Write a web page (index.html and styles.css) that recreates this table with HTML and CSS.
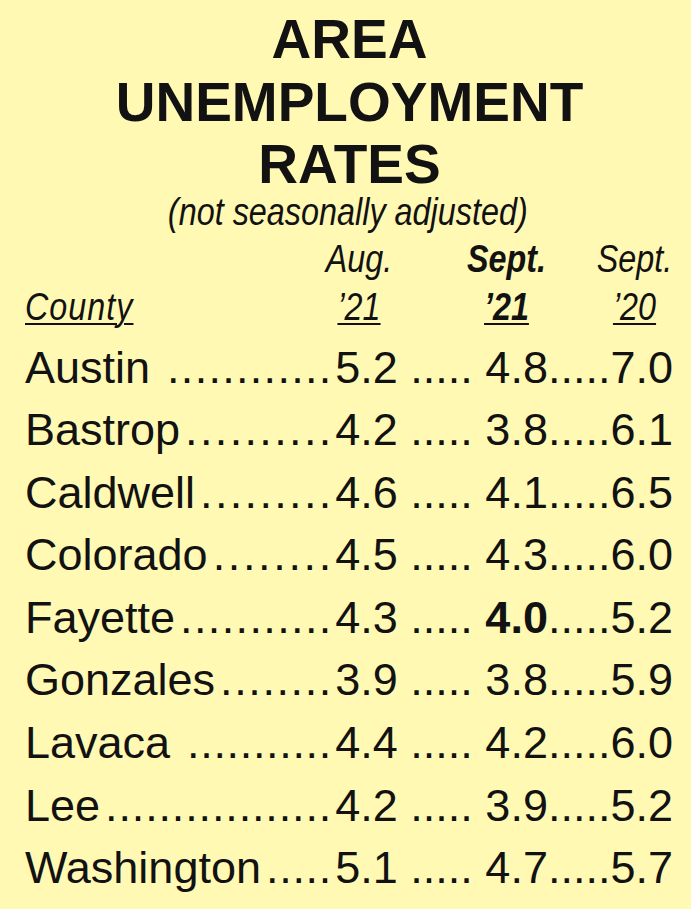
FILE: index.html
```html
<!DOCTYPE html>
<html lang="en">
<head>
<meta charset="utf-8">
<title>Area Unemployment Rates</title>
<link rel="stylesheet" href="styles.css">
</head>
<body>
<main class="panel">
  <h1 class="title">AREA<br>UNEMPLOYMENT<br>RATES</h1>
  <p class="subtitle"><span class="narrow">(not seasonally adjusted)</span></p>
  <div class="head">
    <span class="county"><u>County</u></span>
    <span class="col">Aug.<br><u>’21</u></span>
    <span class="col cur">Sept.<br><u>’21</u></span>
    <span class="col">Sept.<br><u>’20</u></span>
  </div>
  <ul class="rows">
    <li class="row"><span class="name sp">Austin</span><span class="lead">. . . . . . . . . . . .</span><span class="vals">5.2 ..... 4.8.....7.0</span></li>
    <li class="row"><span class="name">Bastrop</span><span class="lead">. . . . . . . . . .</span><span class="vals">4.2 ..... 3.8.....6.1</span></li>
    <li class="row"><span class="name">Caldwell</span><span class="lead">. . . . . . . . .</span><span class="vals">4.6 ..... 4.1.....6.5</span></li>
    <li class="row"><span class="name">Colorado</span><span class="lead">. . . . . . . .</span><span class="vals">4.5 ..... 4.3.....6.0</span></li>
    <li class="row"><span class="name">Fayette</span><span class="lead">. . . . . . . . . . .</span><span class="vals">4.3 ..... <b>4.0</b>.....5.2</span></li>
    <li class="row"><span class="name">Gonzales</span><span class="lead">. . . . . . . .</span><span class="vals">3.9 ..... 3.8.....5.9</span></li>
    <li class="row"><span class="name sp">Lavaca</span><span class="lead">. . . . . . . . . . .</span><span class="vals">4.4 ..... 4.2.....6.0</span></li>
    <li class="row"><span class="name">Lee</span><span class="lead">. . . . . . . . . . . . . . . . .</span><span class="vals">4.2 ..... 3.9.....5.2</span></li>
    <li class="row"><span class="name">Washington</span><span class="lead">. . . . .</span><span class="vals">5.1 ..... 4.7.....5.7</span></li>
  </ul>
</main>
</body>
</html>
```

FILE: styles.css
```css
html, body {
  margin: 0;
  padding: 0;
  background: #fff9b4;
}

.panel {
  width: 691px;
  min-height: 909px;
  box-sizing: border-box;
  background: #fff9b4;
  color: #121212;
  font-family: "Liberation Sans", Arial, sans-serif;
  overflow: hidden;
}

.title {
  margin: 0;
  padding: 8px 0 0 8px;
  text-align: center;
  font-size: 55px;
  font-weight: 700;
  line-height: 62.5px;
}

.subtitle {
  margin: -5px 0 0 4px;
  text-align: center;
  font-style: italic;
  font-size: 39px;
  line-height: 42px;
  white-space: nowrap;
}

.narrow {
  display: inline-block;
  transform: scaleX(0.83);
  transform-origin: center;
}

.head {
  display: grid;
  grid-template-columns: 1fr 142px 153px 103px;
  align-items: end;
  margin-top: 2px;
  padding: 0 5px 0 25px;
  font-style: italic;
  font-size: 38px;
  line-height: 48px;
  white-space: nowrap;
}

.head u {
  text-decoration-thickness: 2px;
  text-underline-offset: 3px;
}

.county {
  transform: scaleX(0.85);
  transform-origin: left center;
  letter-spacing: 1.2px;
}

.col {
  text-align: center;
  transform: scaleX(0.85);
  transform-origin: center;
}

.cur {
  font-weight: 700;
}

.rows {
  list-style: none;
  margin: 6px 0 0;
  padding: 0;
}

.row {
  display: flex;
  padding: 0 18px 0 25px;
  font-size: 45px;
  line-height: 62.6px;
}

.name {
  flex: none;
  white-space: nowrap;
}

.name.sp {
  margin-right: 12px;
}

.lead {
  flex: 1 1 auto;
  min-width: 0;
  padding: 0 4px 0 5px;
  word-spacing: -13.5px;
  text-align: justify;
  text-align-last: justify;
  white-space: normal;
}

.vals {
  flex: none;
  white-space: nowrap;
}

.vals b {
  font-weight: 700;
}
```
